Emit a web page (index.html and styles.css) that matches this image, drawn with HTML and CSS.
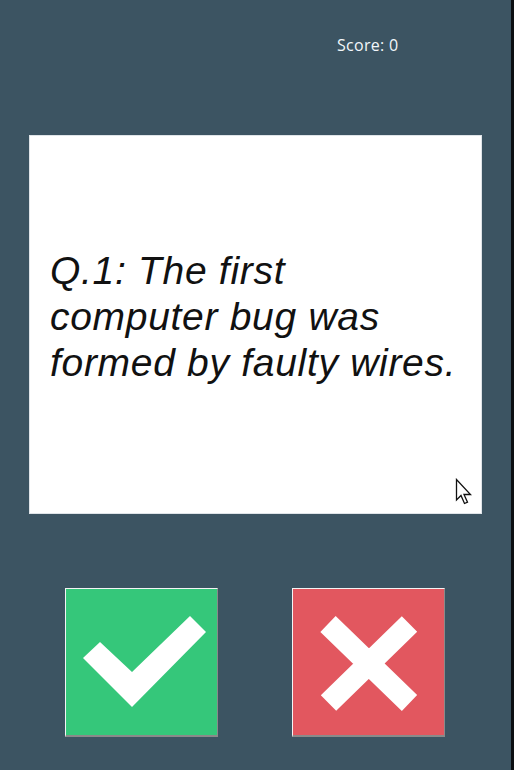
FILE: index.html
```html
<!DOCTYPE html>
<html>
<head>
<meta charset="utf-8">
<link rel="stylesheet" href="styles.css">
</head>
<body>
<div class="app">
  <div class="score">Score: 0</div>
  <div class="card">
    <p class="question">Q.1: The first<br>computer bug was<br>formed by faulty wires.</p>
    <svg class="cursor" width="20" height="30" viewBox="0 0 20 30">
      <path d="M1.5 1.5 L1.5 22 L6 17.5 L9.5 25.5 L12.5 24.2 L9 16.5 L15.5 16.5 Z" fill="#fff" stroke="#111" stroke-width="1.3" stroke-linejoin="miter"/>
    </svg>
  </div>
  <div class="buttons">
    <button class="btn btn-true" type="button" aria-label="True">
      <svg width="151" height="146" viewBox="0 0 151 146">
        <polygon points="34,53 17,69 66,118 140,43 124,27 66,83" fill="#fff"/>
      </svg>
    </button>
    <button class="btn btn-false" type="button" aria-label="False">
      <svg width="151" height="146" viewBox="0 0 151 146">
        <path d="M35 35 L116.5 114 M116.5 35 L35.5 114" stroke="#fff" stroke-width="22" fill="none"/>
      </svg>
    </button>
  </div>
</div>
</body>
</html>
```

FILE: styles.css
```css
html, body {
  margin: 0;
  padding: 0;
}

body {
  background: #3c5462;
}

.app {
  width: 514px;
  height: 770px;
  box-sizing: border-box;
  border-right: 3px solid #0b0f12;
  background: #3c5462;
  padding-top: 35px;
  overflow: hidden;
}

.score {
  margin-left: 337px;
  font-family: "Open Sans", "Noto Sans", sans-serif;
  font-size: 16px;
  line-height: 20px;
  letter-spacing: 0.3px;
  color: #f2f7fb;
}

.card {
  position: relative;
  margin: 80px 0 0 29px;
  width: 453px;
  height: 379px;
  box-sizing: border-box;
  background: #fff;
  border: 1px solid #dfe4e8;
  display: flex;
  align-items: center;
  padding: 0 0 16px 20px;
}

.question {
  margin: 0;
  font-family: "Liberation Sans", Arial, sans-serif;
  font-style: italic;
  font-size: 39px;
  line-height: 46px;
  letter-spacing: 0.7px;
  color: #111;
}

.cursor {
  position: absolute;
  left: 425px;
  top: 342px;
}

.buttons {
  display: flex;
  gap: 74px;
  margin-top: 74px;
  padding-left: 65px;
}

.btn {
  width: 153px;
  height: 149px;
  padding: 0;
  margin: 0;
  box-sizing: border-box;
  border-style: solid;
  border-width: 1px 1px 2px 1px;
  border-color: #f4f4f4 #8a8a8a #8a8a8a #f4f4f4;
  display: block;
  cursor: pointer;
}

.btn svg {
  display: block;
}

.btn-true {
  background: #35c77a;
}

.btn-false {
  background: #e2575f;
}
```
